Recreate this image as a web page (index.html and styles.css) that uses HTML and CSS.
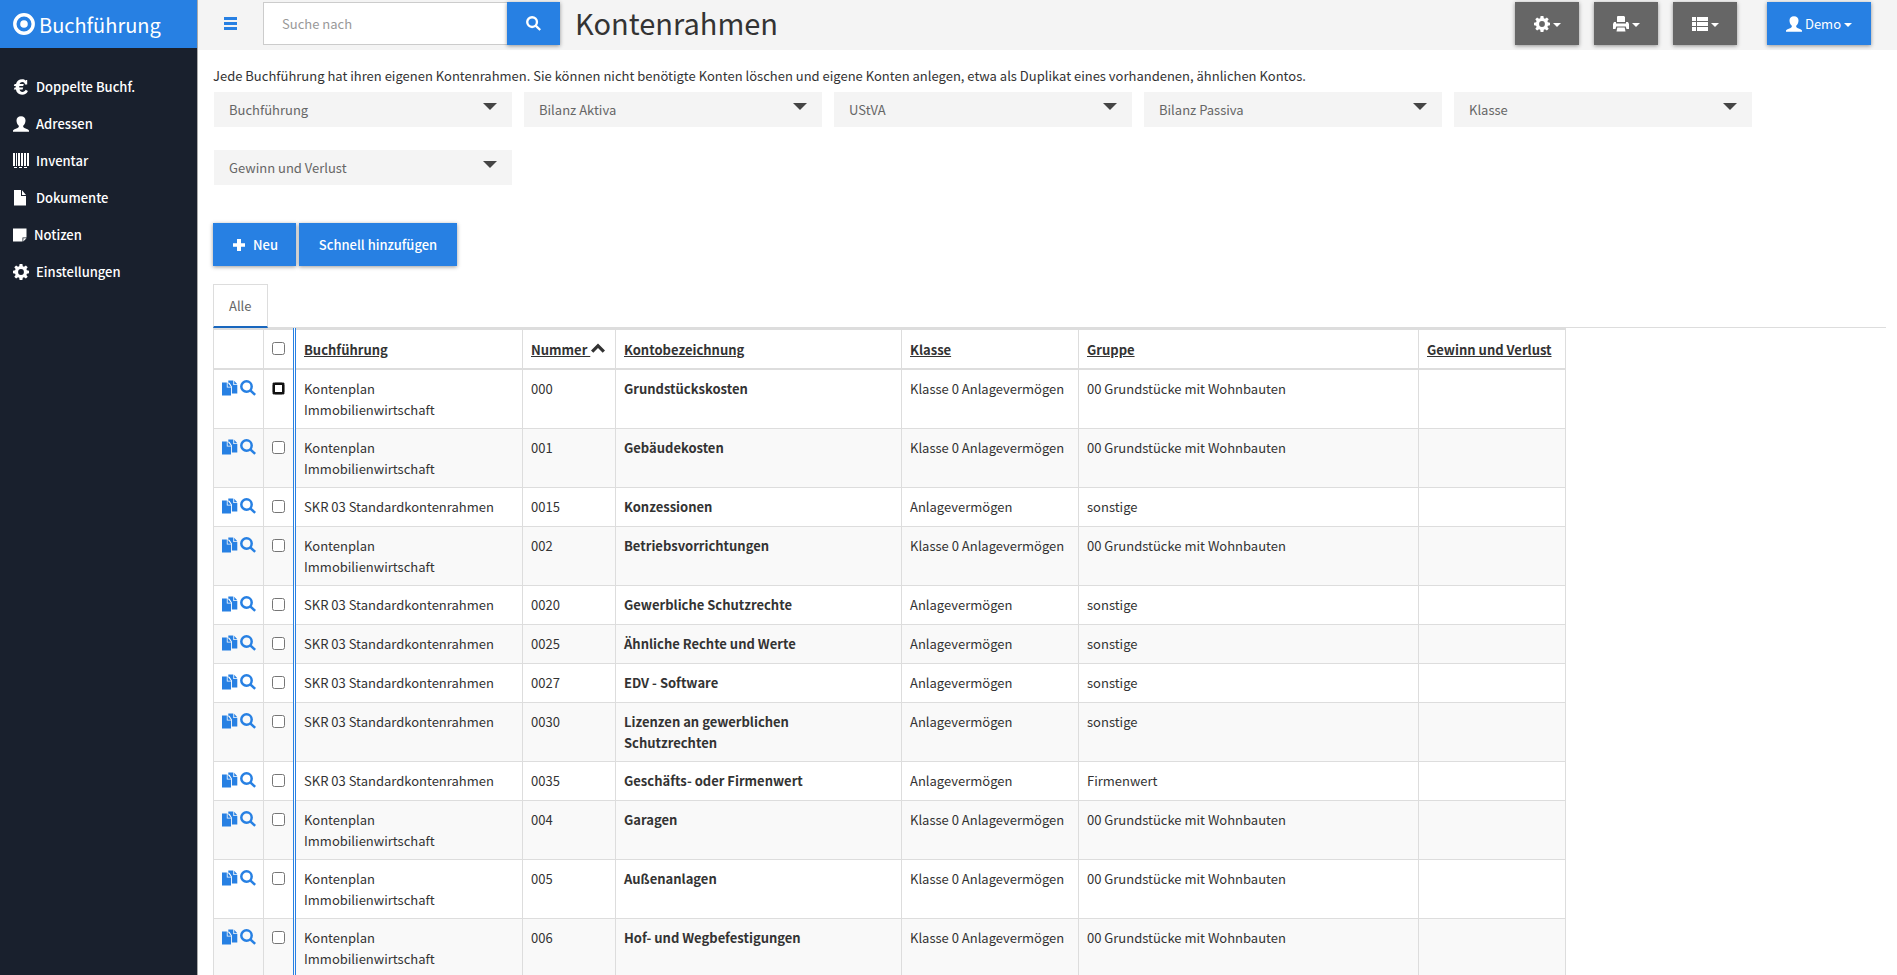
FILE: index.html
```html
<!DOCTYPE html>
<html lang="de">
<head>
<meta charset="utf-8">
<title>Kontenrahmen</title>
<link rel="stylesheet" href="styles.css">
</head>
<body>
<svg class="sprite" aria-hidden="true">
  <symbol id="i-target" viewBox="0 0 22 22"><circle cx="11" cy="11" r="9.2" fill="none" stroke="currentColor" stroke-width="3.4"/><circle cx="11" cy="11" r="3.8"/></symbol>
  <symbol id="i-euro" viewBox="0 0 16 16"><path d="M14.200 1V5.400H12C11.500 3.800 10.700 3 9.400 3C8 3 7 3.800 6.600 5.100H10.800L10.200 7H6.300V8.600H10.200L9.600 10.500H6.500C6.900 12.100 7.900 12.900 9.400 12.900C10.900 12.900 12 12.100 12.600 10.700L14.900 11.900C13.900 14.400 11.900 15.700 9.100 15.700C5.700 15.700 3.500 13.800 2.900 10.500H.8L1.600 8.600H2.700V7H.8L1.600 5.100H3C3.700 2.100 5.900 .3 9.200 .3C10.700 .3 11.800 .8 12.600 1.700L12.900 1Z"/></symbol>
  <symbol id="i-user" viewBox="0 0 16 16"><path d="M8 .3C10.900 .3 12.500 2 12.500 4.500C12.500 6.700 11.600 8.600 10.200 9.700V10.600C10.200 11.300 10.600 11.600 11.400 11.900L14.500 13.200C15.600 13.700 16 14.200 16 15V15.700H0V15C0 14.200 .4 13.700 1.500 13.200L4.600 11.900C5.400 11.600 5.800 11.300 5.800 10.600V9.700C4.400 8.600 3.500 6.700 3.500 4.500C3.500 2 5.100 .3 8 .3Z"/></symbol>
  <symbol id="i-barcode" viewBox="0 0 16 16"><path d="M0 0H2V13H0ZM3 0H4V13H3ZM5 0H7V13H5ZM8 0H10V13H8ZM11 0H13V13H11ZM14 0H16V13H14ZM1 14H4V15H1ZM6 14H9V15H6ZM11 14H14V15H11Z"/></symbol>
  <symbol id="i-file" viewBox="0 0 16 16"><path d="M1 0H8V6H13V15.500H1ZM9 0.300L13 5H9Z"/></symbol>
  <symbol id="i-note" viewBox="0 0 14 16"><path d="M0 1.500H13.500V10.500H9.500V14.500H0ZM10.300 11.300H13.500L10.300 14.500Z"/></symbol>
  <symbol id="i-cog" viewBox="0 0 16 16"><path fill-rule="evenodd" d="M6.600 0H9.400L9.800 2.200L11 2.700L12.900 1.400L14.700 3.200L13.400 5.100L13.900 6.300L16 6.700V9.300L13.900 9.700L13.400 10.900L14.700 12.800L12.900 14.600L11 13.300L9.800 13.800L9.400 16H6.600L6.200 13.800L5 13.300L3.100 14.600L1.300 12.800L2.600 10.900L2.100 9.700L0 9.300V6.700L2.100 6.300L2.600 5.100L1.300 3.200L3.100 1.400L5 2.700L6.200 2.200ZM8 5.100A2.900 2.900 0 1 0 8 10.900A2.900 2.900 0 1 0 8 5.100Z"/></symbol>
  <symbol id="i-menu" viewBox="0 0 13 13"><path d="M0 0H13V3H0ZM0 5H13V8H0ZM0 10H13V13H0Z"/></symbol>
  <symbol id="i-search" viewBox="0 0 16 16"><circle cx="6.500" cy="6.500" r="5.200" fill="none" stroke="currentColor" stroke-width="2.500"/><path d="M9.400 11.200L11.200 9.400L16 14L14.300 15.800Z"/></symbol>
  <symbol id="i-print" viewBox="0 0 16 16"><path d="M4.500 0H11L12 1V6H4V1ZM1 6H3V7.500H13V6H15L16 8V13H13.500L12.800 10.500H3.200L2.500 13H0V8ZM4.300 11.500H11.700L12.500 15.500H3.500Z"/></symbol>
  <symbol id="i-list" viewBox="0 0 16 16"><path d="M0 1H4V5H0ZM5 1H16V5H5ZM0 6H4V10H0ZM5 6H16V10H5ZM0 11H4V15H0ZM5 11H16V15H5Z"/></symbol>
  <symbol id="i-plus" viewBox="0 0 16 16"><path d="M6 2H10V6.300H14V9.700H10V14H6V9.700H2V6.300H6Z"/></symbol>
  <symbol id="i-copy" viewBox="0 0 16 16"><path d="M0 2.500H4.800V7.500H9V15.500H0ZM5.600 2.500L9 6.700H5.600ZM6.300 .5H11.300V5H15.300V13.500H9.900V6.500L7.500 2.700H6.300ZM12.200 .8L15.300 4.200H12.200Z"/></symbol>
  <symbol id="i-up" viewBox="0 0 16 16"><path d="M8 2.500L15 9.500L12.700 11.800L8 7.100L3.300 11.800L1 9.500Z"/></symbol>
</svg>
<div class="app">
  <aside class="sidebar">
    <a class="brand" href="#"><svg class="brand-icon"><use href="#i-target"/></svg>Buchführung</a>
    <nav class="menu">
      <a href="#"><svg class="icon"><use href="#i-euro"/></svg>Doppelte Buchf.</a>
      <a href="#"><svg class="icon"><use href="#i-user"/></svg>Adressen</a>
      <a href="#"><svg class="icon"><use href="#i-barcode"/></svg>Inventar</a>
      <a href="#"><svg class="icon"><use href="#i-file"/></svg>Dokumente</a>
      <a href="#"><svg class="icon icon-note"><use href="#i-note"/></svg>Notizen</a>
      <a href="#"><svg class="icon"><use href="#i-cog"/></svg>Einstellungen</a>
    </nav>
  </aside>
  <div class="page">
    <header class="topbar">
      <button class="toggle" type="button" aria-label="Menü"><svg class="toggle-icon"><use href="#i-menu"/></svg></button>
      <form class="search">
        <input type="text" placeholder="Suche nach" aria-label="Suche nach">
        <button class="btn btn-search" type="button" aria-label="Suchen"><svg class="icon icon-sm"><use href="#i-search"/></svg></button>
      </form>
      <h1>Kontenrahmen</h1>
      <div class="tools">
        <button class="btn btn-dark" type="button" aria-label="Aktionen"><svg class="icon"><use href="#i-cog"/></svg><span class="caret"></span></button>
        <button class="btn btn-dark" type="button" aria-label="Drucken"><svg class="icon"><use href="#i-print"/></svg><span class="caret"></span></button>
        <button class="btn btn-dark" type="button" aria-label="Ansicht"><svg class="icon"><use href="#i-list"/></svg><span class="caret"></span></button>
        <button class="btn btn-user" type="button"><svg class="icon"><use href="#i-user"/></svg>Demo<span class="caret"></span></button>
      </div>
    </header>
    <main class="content">
      <p class="intro">Jede Buchführung hat ihren eigenen Kontenrahmen. Sie können nicht benötigte Konten löschen und eigene Konten anlegen, etwa als Duplikat eines vorhandenen, ähnlichen Kontos.</p>
      <div class="filters">
        <div class="filter"><select aria-label="Buchführung"><option>Buchführung</option></select></div>
        <div class="filter"><select aria-label="Bilanz Aktiva"><option>Bilanz Aktiva</option></select></div>
        <div class="filter"><select aria-label="UStVA"><option>UStVA</option></select></div>
        <div class="filter"><select aria-label="Bilanz Passiva"><option>Bilanz Passiva</option></select></div>
        <div class="filter"><select aria-label="Klasse"><option>Klasse</option></select></div>
        <div class="filter"><select aria-label="Gewinn und Verlust"><option>Gewinn und Verlust</option></select></div>
      </div>
      <div class="actions">
        <button class="btn btn-new" type="button"><svg class="icon"><use href="#i-plus"/></svg>Neu</button>
        <button class="btn btn-quick" type="button">Schnell hinzufügen</button>
      </div>
      <div class="tabs"><a class="tab" href="#">Alle</a></div>
      <table class="grid">
        <colgroup><col class="c-icons"><col class="c-check"><col class="c-book"><col class="c-num"><col class="c-name"><col class="c-class"><col class="c-group"><col class="c-result"></colgroup>
        <thead>
          <tr><th></th><th class="check"><input type="checkbox" aria-label="Alle auswählen"></th><th><a href="#">Buchführung</a></th><th><a href="#">Nummer <svg class="sort"><use href="#i-up"/></svg></a></th><th><a href="#">Kontobezeichnung</a></th><th><a href="#">Klasse</a></th><th><a href="#">Gruppe</a></th><th><a href="#">Gewinn und Verlust</a></th></tr>
        </thead>
        <tbody>
          <tr><td class="ops"><a href="#" aria-label="Kopieren"><svg class="icon"><use href="#i-copy"/></svg></a><a href="#" aria-label="Anzeigen"><svg class="icon"><use href="#i-search"/></svg></a></td><td class="check"><input class="current" type="checkbox" aria-label="000"></td><td>Kontenplan<br>Immobilienwirtschaft</td><td>000</td><td class="name">Grundstückskosten</td><td>Klasse 0 Anlagevermögen</td><td>00 Grundstücke mit Wohnbauten</td><td></td></tr>
          <tr><td class="ops"><a href="#" aria-label="Kopieren"><svg class="icon"><use href="#i-copy"/></svg></a><a href="#" aria-label="Anzeigen"><svg class="icon"><use href="#i-search"/></svg></a></td><td class="check"><input type="checkbox" aria-label="001"></td><td>Kontenplan<br>Immobilienwirtschaft</td><td>001</td><td class="name">Gebäudekosten</td><td>Klasse 0 Anlagevermögen</td><td>00 Grundstücke mit Wohnbauten</td><td></td></tr>
          <tr><td class="ops"><a href="#" aria-label="Kopieren"><svg class="icon"><use href="#i-copy"/></svg></a><a href="#" aria-label="Anzeigen"><svg class="icon"><use href="#i-search"/></svg></a></td><td class="check"><input type="checkbox" aria-label="0015"></td><td>SKR 03 Standardkontenrahmen</td><td>0015</td><td class="name">Konzessionen</td><td>Anlagevermögen</td><td>sonstige</td><td></td></tr>
          <tr><td class="ops"><a href="#" aria-label="Kopieren"><svg class="icon"><use href="#i-copy"/></svg></a><a href="#" aria-label="Anzeigen"><svg class="icon"><use href="#i-search"/></svg></a></td><td class="check"><input type="checkbox" aria-label="002"></td><td>Kontenplan<br>Immobilienwirtschaft</td><td>002</td><td class="name">Betriebsvorrichtungen</td><td>Klasse 0 Anlagevermögen</td><td>00 Grundstücke mit Wohnbauten</td><td></td></tr>
          <tr><td class="ops"><a href="#" aria-label="Kopieren"><svg class="icon"><use href="#i-copy"/></svg></a><a href="#" aria-label="Anzeigen"><svg class="icon"><use href="#i-search"/></svg></a></td><td class="check"><input type="checkbox" aria-label="0020"></td><td>SKR 03 Standardkontenrahmen</td><td>0020</td><td class="name">Gewerbliche Schutzrechte</td><td>Anlagevermögen</td><td>sonstige</td><td></td></tr>
          <tr><td class="ops"><a href="#" aria-label="Kopieren"><svg class="icon"><use href="#i-copy"/></svg></a><a href="#" aria-label="Anzeigen"><svg class="icon"><use href="#i-search"/></svg></a></td><td class="check"><input type="checkbox" aria-label="0025"></td><td>SKR 03 Standardkontenrahmen</td><td>0025</td><td class="name">Ähnliche Rechte und Werte</td><td>Anlagevermögen</td><td>sonstige</td><td></td></tr>
          <tr><td class="ops"><a href="#" aria-label="Kopieren"><svg class="icon"><use href="#i-copy"/></svg></a><a href="#" aria-label="Anzeigen"><svg class="icon"><use href="#i-search"/></svg></a></td><td class="check"><input type="checkbox" aria-label="0027"></td><td>SKR 03 Standardkontenrahmen</td><td>0027</td><td class="name">EDV - Software</td><td>Anlagevermögen</td><td>sonstige</td><td></td></tr>
          <tr><td class="ops"><a href="#" aria-label="Kopieren"><svg class="icon"><use href="#i-copy"/></svg></a><a href="#" aria-label="Anzeigen"><svg class="icon"><use href="#i-search"/></svg></a></td><td class="check"><input type="checkbox" aria-label="0030"></td><td>SKR 03 Standardkontenrahmen</td><td>0030</td><td class="name">Lizenzen an gewerblichen<br>Schutzrechten</td><td>Anlagevermögen</td><td>sonstige</td><td></td></tr>
          <tr><td class="ops"><a href="#" aria-label="Kopieren"><svg class="icon"><use href="#i-copy"/></svg></a><a href="#" aria-label="Anzeigen"><svg class="icon"><use href="#i-search"/></svg></a></td><td class="check"><input type="checkbox" aria-label="0035"></td><td>SKR 03 Standardkontenrahmen</td><td>0035</td><td class="name">Geschäfts- oder Firmenwert</td><td>Anlagevermögen</td><td>Firmenwert</td><td></td></tr>
          <tr><td class="ops"><a href="#" aria-label="Kopieren"><svg class="icon"><use href="#i-copy"/></svg></a><a href="#" aria-label="Anzeigen"><svg class="icon"><use href="#i-search"/></svg></a></td><td class="check"><input type="checkbox" aria-label="004"></td><td>Kontenplan<br>Immobilienwirtschaft</td><td>004</td><td class="name">Garagen</td><td>Klasse 0 Anlagevermögen</td><td>00 Grundstücke mit Wohnbauten</td><td></td></tr>
          <tr><td class="ops"><a href="#" aria-label="Kopieren"><svg class="icon"><use href="#i-copy"/></svg></a><a href="#" aria-label="Anzeigen"><svg class="icon"><use href="#i-search"/></svg></a></td><td class="check"><input type="checkbox" aria-label="005"></td><td>Kontenplan<br>Immobilienwirtschaft</td><td>005</td><td class="name">Außenanlagen</td><td>Klasse 0 Anlagevermögen</td><td>00 Grundstücke mit Wohnbauten</td><td></td></tr>
          <tr><td class="ops"><a href="#" aria-label="Kopieren"><svg class="icon"><use href="#i-copy"/></svg></a><a href="#" aria-label="Anzeigen"><svg class="icon"><use href="#i-search"/></svg></a></td><td class="check"><input type="checkbox" aria-label="006"></td><td>Kontenplan<br>Immobilienwirtschaft</td><td>006</td><td class="name">Hof- und Wegbefestigungen</td><td>Klasse 0 Anlagevermögen</td><td>00 Grundstücke mit Wohnbauten</td><td></td></tr>
        </tbody>
      </table>
    </main>
  </div>
</div>
</body>
</html>
```
FILE: styles.css
```css
* { box-sizing: border-box; }
body {
  margin: 0;
  color: #333;
  background: #fff;
  font: 13px/21px "Noto Sans CJK SC", "Noto Sans", sans-serif;
}
button, input, select { font: inherit; }
a { color: inherit; text-decoration: none; }
svg { fill: currentColor; flex: none; }
.sprite { display: none; }
.icon { width: 16px; height: 16px; }
.icon-sm { width: 15px; height: 15px; }
.icon-note { width: 14px; }

.app { display: flex; height: 100vh; overflow: hidden; }
.sidebar { flex: none; width: 198px; background: #19202d; border-right: 1px solid #aaa; color: #fff; font-weight: 500; }
.brand { display: flex; align-items: center; gap: 4px; height: 48px; padding: 0 13px; background: #2780e3; font-size: 20px; font-weight: 400; }
.brand-icon { width: 22px; height: 22px; }
.menu { padding-top: 20px; }
.menu a { display: flex; align-items: center; gap: 7px; height: 37px; padding: 0 13px; }

.page { flex: 1; min-width: 0; }
.topbar { display: flex; align-items: flex-start; height: 50px; padding: 2px 26px 0; background: #f4f4f4; }
.toggle { display: flex; align-items: center; height: 43px; padding: 0; border: 0; background: none; color: #2780e3; }
.toggle-icon { width: 13px; height: 13px; }
.search { display: flex; margin: 0 15px 0 26px; }
.search input { width: 244px; height: 43px; padding: 0 18px; border: 1px solid #ccc; border-right: 0; background: #fff; color: #333; }
.search input::placeholder { color: #999; }
.btn {
  display: flex; align-items: center; justify-content: center;
  height: 43px; padding: 0; border: 0;
  background: #2780e3; color: #fff;
  box-shadow: 0 1px 4px rgba(0, 0, 0, .4);
}
.btn-search { width: 53px; }
h1 { margin: 0; font-size: 29px; font-weight: 400; line-height: 40px; }
.tools { display: flex; gap: 15px; margin-left: auto; }
.btn-dark { width: 64px; gap: 3px; background: #666; }
.btn-user { width: 104px; margin-left: 15px; gap: 3px; }
.caret { border: 4px solid transparent; border-top-color: currentColor; border-bottom: 0; margin-top: 3px; }

.content { padding: 15px 11px 0 15px; }
.intro { margin: 0 0 6px; }
.filters { display: flex; flex-wrap: wrap; gap: 23px 12px; padding: 0 100px 0 1px; }
.filter { position: relative; width: 298px; }
.filter select { display: block; width: 100%; height: 35px; padding: 0 15px; appearance: none; border: 0; border-radius: 0; background: #f4f4f4; color: #666; }
.filter::after { content: ""; position: absolute; right: 15px; top: 11px; border: 7px solid transparent; border-top-color: #444; border-bottom: 0; pointer-events: none; }
.actions { display: flex; gap: 3px; margin: 38px 0 18px; font-weight: 500; }
.btn-new { width: 83px; gap: 6px; }
.btn-quick { width: 158px; }
.tabs { display: flex; border-bottom: 1px solid #ddd; }
.tab { height: 44px; margin-bottom: -1px; padding: 10px 15px; border: 1px solid #ddd; border-bottom: 2px solid #1967be; background: #fff; color: #666; }

.grid { table-layout: fixed; width: 1352px; border-collapse: collapse; }
.grid th, .grid td { padding: 8px; border: 1px solid #ddd; text-align: left; vertical-align: top; }
.grid td { height: 39px; }
.grid th { height: 39px; padding: 9px 8px 8px; border-top-width: 2px; border-bottom-width: 2px; font-weight: 700; white-space: nowrap; }
.grid th a { text-decoration: underline; }
.grid tbody tr:nth-child(even) { background: #f9f9f9; }
.grid .name { font-weight: 700; }
.grid .check { padding-left: 8px; padding-right: 0; border-right: 3px double #2780e3; line-height: 0; }
.grid .ops { padding-top: 10px; padding-bottom: 4px; white-space: nowrap; color: #2780e3; }
.ops a { display: inline-block; margin-right: 2px; line-height: 0; }
.grid .check input { width: 13px; height: 13px; margin: 4px 0 0; }
.grid th.check input { margin-top: 3px; }
.grid .check .current { outline: 2px solid #111; outline-offset: -3px; border-radius: 3px; }
.sort { width: 16px; height: 16px; vertical-align: -2px; }
.c-icons { width: 50px; }
.c-check { width: 31px; }
.c-book { width: 228px; }
.c-num { width: 93px; }
.c-name { width: 286px; }
.c-class { width: 177px; }
.c-group { width: 340px; }
.c-result { width: 147px; }
```
